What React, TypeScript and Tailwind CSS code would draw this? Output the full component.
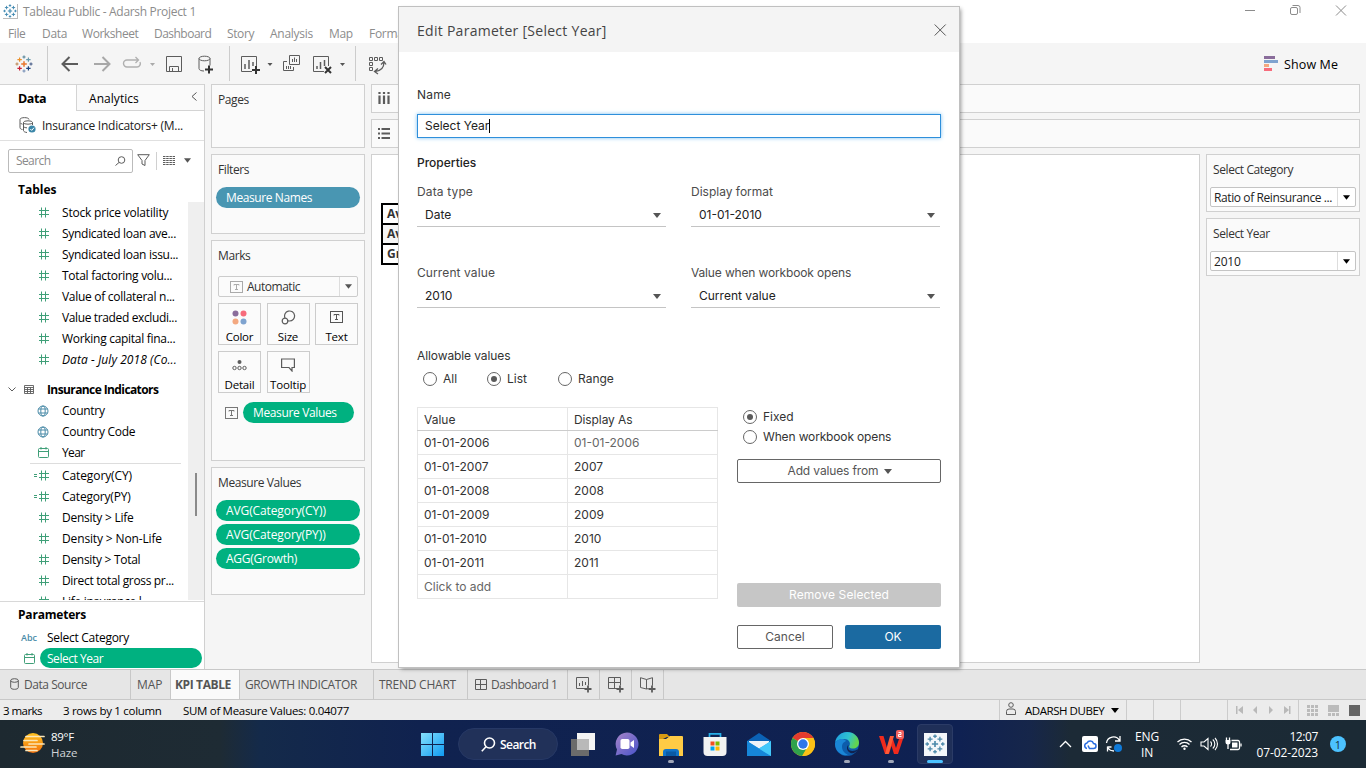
import type { ReactNode } from "react";

/* ---------- small glyphs ---------- */

function Caret({ className = "fill-[#555]" }: { className?: string }) {
  return (
    <svg width="8" height="5" viewBox="0 0 8 5" className={"shrink-0 " + className}>
      <path d="M0 0h8L4 5z" />
    </svg>
  );
}

function TableauMark({ size, colors }: { size: number; colors: string[] }) {
  const plus = (x: number, y: number, r: number, c: string, w = 1.2) => (
    <path key={x + "-" + y} d={`M${x - r} ${y}h${2 * r}M${x} ${y - r}v${2 * r}`} stroke={c} strokeWidth={w} />
  );
  return (
    <svg width={size} height={size} viewBox="0 0 18 18" fill="none" className="shrink-0">
      {plus(9, 9, 2.8, colors[0], 1.5)}
      {plus(9, 2, 1.6, colors[1])}
      {plus(9, 16, 1.6, colors[2])}
      {plus(2, 9, 1.6, colors[3])}
      {plus(16, 9, 1.6, colors[4])}
      {plus(4.6, 4.6, 2.2, colors[5])}
      {plus(13.4, 4.6, 2.2, colors[6])}
      {plus(4.6, 13.4, 2.2, colors[7])}
      {plus(13.4, 13.4, 2.2, colors[8])}
    </svg>
  );
}

function HashIcon({ calc = false }: { calc?: boolean }) {
  return (
    <svg width="15" height="11" viewBox="0 0 15 11" fill="none" stroke="#3f9f78" className="shrink-0">
      <path d="M5 3.5h10M5 7.5h10M7.5 .5v10M11.5 .5v10" />
      {calc && <path d="M0 4.5h3M0 6.5h3" />}
    </svg>
  );
}

function GlobeIcon() {
  return (
    <svg width="12" height="12" viewBox="0 0 12 12" fill="none" stroke="#4a8ba8" className="shrink-0">
      <circle cx="6" cy="6" r="5" />
      <ellipse cx="6" cy="6" rx="2.2" ry="5" />
      <path d="M1.5 4h9M1.5 8h9" />
    </svg>
  );
}

function CalendarIcon() {
  return (
    <svg width="11" height="11" viewBox="0 0 11 11" fill="none" stroke="#3f9f78" className="shrink-0">
      <rect x=".5" y="1.5" width="10" height="9" rx="1" />
      <path d="M.5 4.5h10M3 0v2.5M8 0v2.5" />
    </svg>
  );
}

function TextBoxIcon({ color = "#666" }: { color?: string }) {
  return (
    <svg width="13" height="12" viewBox="0 0 13 12" fill="none" stroke={color} className="shrink-0">
      <rect x=".5" y=".5" width="12" height="11" />
      <path d="M4 4.500v-1h5v1M6.500 3.500v5M5 8.500h3" />
    </svg>
  );
}

const g = { fill: "none", stroke: "#5c5c5c" } as const;

/* ---------- window chrome ---------- */

function TitleBar() {
  return (
    <div className="flex h-[23px] shrink-0 items-center bg-white">
      <div className="ml-[3px] flex size-[15px] items-center justify-center border-r border-b border-[#bbb]">
        <TableauMark size={14} colors={Array(9).fill("#3f88b0")} />
      </div>
      <span className="ml-[5px] text-[12px] tracking-[-0.31px] text-[#8c8c8c]">Tableau Public - Adarsh Project 1</span>
      <svg width="104" height="14" viewBox="0 0 104 14" fill="none" stroke="#8c8c8c" className="mr-[18px] mb-[3px] ml-auto">
        <path d="M1 7.500h10" />
        <rect x="46.500" y="4.500" width="7" height="7" rx="1.500" />
        <path d="M48.500 2.500h5.500a2 2 0 0 1 2 2v5.500" />
        <path d="M92 2.500l10 10M102 2.500l-10 10" />
      </svg>
    </div>
  );
}

function MenuBar() {
  return (
    <div className="flex h-5 shrink-0 items-center bg-white pt-[2px] pl-2 text-[12px] whitespace-nowrap text-[#8c8c8c]">
      <span className="w-[34px] tracking-[-0.4px]">File</span>
      <span className="w-[40px] tracking-[-0.3px]">Data</span>
      <span className="w-[72px] tracking-[-0.45px]">Worksheet</span>
      <span className="w-[73px] tracking-[-0.52px]">Dashboard</span>
      <span className="w-[43px] tracking-[-0.4px]">Story</span>
      <span className="w-[59px] tracking-[-0.27px]">Analysis</span>
      <span className="w-[40px] tracking-[-0.3px]">Map</span>
      <span className="tracking-[-0.3px]">Format</span>
    </div>
  );
}

function ToolBar() {
  return (
    <div className="flex h-[41px] shrink-0 items-center bg-[#f5f5f5]">
      <div className="flex h-[35px] w-[48px] items-center justify-center border-r border-[#ccc] pt-px">
        <TableauMark
          size={18}
          colors={["#e8762c", "#59879b", "#7b93b8", "#c08a5a", "#4a5f8a", "#eb912c", "#6a9aac", "#c72035", "#1f447e"]}
        />
      </div>
      <div className="flex h-[35px] w-[182px] items-center border-r border-[#ccc]">
        <svg width="181" height="24" viewBox="48 52 181 24" {...g}>
          <path d="M78 64H63M69.500 57L62.500 64l7 7" strokeWidth="2" />
          <path d="M94 64h15M102.500 57l7 7-7 7" stroke="#a8a8a8" strokeWidth="2" />
          <path d="M131 60h-4a3.500 3.500 0 0 0 0 7h10a3.500 3.500 0 0 0 3-5" stroke="#b0b0b0" strokeWidth="1.400" />
          <path d="M131 60h7M135.500 57l3 3-3 3" stroke="#b0b0b0" strokeWidth="1.300" />
          <path d="M150 63h5l-2.500 3z" fill="#aaa" stroke="none" />
          <path d="M166.500 56.500h15v15h-15zM169.500 71v-4.500h9V71M172.500 68v3" />
          <ellipse cx="204.500" cy="58.500" rx="5.500" ry="2.300" />
          <path d="M199 58.500v10c0 1.500 2 2.500 5 2.500M210 58.500v7" />
          <path d="M205 69.500h8M209 65.500v8" strokeWidth="2" stroke="#333" />
        </svg>
      </div>
      <div className="flex h-[35px] w-[126px] items-center border-r border-[#ccc]">
        <svg width="125" height="24" viewBox="230 52 125 24" {...g}>
          <path d="M252 71.500h-10.500v-15h15V66" />
          <path d="M245 69v-5M249 69v-9M253 66v-4" strokeWidth="1.500" />
          <path d="M252 70h8M256 66v8" strokeWidth="2" stroke="#333" />
          <path d="M267.500 63h5l-2.500 3z" fill="#555" stroke="none" />
          <path d="M289.500 55.500h10v9h-10zM287 61.500h-3.500v9h10V67" />
          <path d="M292.500 62v-3M294.500 62v-4.500M296.500 62v-3M286.500 69v-3M288.500 69v-3M290.500 69v-3" />
          <path d="M324 71.500h-10.500v-15h15V66" />
          <path d="M317 69v-3M320.500 69v-7M324.500 66v-6" strokeWidth="1.500" />
          <path d="M325 67l6 6M331 67l-6 6" strokeWidth="2" stroke="#333" />
          <path d="M340 63h5l-2.500 3z" fill="#555" stroke="none" />
        </svg>
      </div>
      <svg width="44" height="24" viewBox="356 52 44 24" {...g}>
        <path d="M369.500 57.500h3v3h-3zM374.500 57.500h3v3h-3zM379.500 57.500h3v3h-3zM369.500 62.500h3v3h-3zM369.500 67.500h3v3h-3z" />
        <path d="M384 62c0 6-3 9-9 9.500M381 64.500l3-3 2 3M378 68.500l-3.500 3 3.500 2.500" strokeWidth="1.300" />
      </svg>
      <div className="mr-[28px] ml-auto flex items-center gap-[6px] pt-[2px]">
        <svg width="14" height="16" viewBox="0 0 14 16" className="mb-px">
          <path d="M0 0h11v3H0z" fill="#8a6d9b" />
          <path d="M0 4h14v3H0z" fill="#7fa3cf" />
          <path d="M0 8h5v3H0z" fill="#f3a880" />
          <path d="M0 12h8v3H0z" fill="#f76c7c" />
        </svg>
        <span className="pt-px text-[12.500px] tracking-[0.1px] text-black">Show Me</span>
      </div>
    </div>
  );
}

/* ---------- data pane ---------- */

function Field({ icon, children, spacing = "tracking-[-0.29px]" }: { icon: ReactNode; children: ReactNode; spacing?: string }) {
  return (
    <div className="flex h-[21px] shrink-0 items-center pl-[34px]">
      <div className="flex w-[15px] shrink-0 justify-end">{icon}</div>
      <span className={"ml-[13px] text-[12px] whitespace-nowrap text-black " + spacing}>{children}</span>
    </div>
  );
}

function DataPane() {
  return (
    <aside className="flex w-[205px] shrink-0 flex-col overflow-hidden border-r border-[#d0d0d0] bg-white">
      <div className="flex h-[27px] shrink-0">
        <div className="flex w-[76px] items-center border-t border-[#d4d4d4] pt-[2px] pl-[18px] text-[12.500px] font-bold tracking-[-0.4px] text-black">
          Data
        </div>
        <div className="flex flex-1 items-center justify-between border border-r-0 border-[#d4d4d4] bg-[#fafafa] pr-[7px] pl-3">
          <span className="pt-[2px] text-[12px] tracking-[0.05px] text-black">Analytics</span>
          <svg width="6" height="9" viewBox="0 0 6 9" fill="none" stroke="#555" className="mb-[3px]">
            <path d="M5.500 .5L1 4.500l4.500 4" />
          </svg>
        </div>
      </div>
      <div className="flex h-[30px] shrink-0 items-center border-b border-[#e0e0e0] pl-[19px]">
        <svg width="17" height="16" viewBox="0 0 17 16" className="mb-px" {...g}>
          <path d="M10 2.500c0-2.500-9-2.500-9 0v8c0 1 1 2 2.500 2M1.500 6c.5.800 1 1 2 1.200" />
          <ellipse cx="9" cy="5.500" rx="4.500" ry="1.700" />
          <path d="M4.500 5.500v8c0 1 1.500 1.800 3.500 2M13.500 5.500V8M4.500 9.500c.8 1 2 1.300 3.500 1.300" />
          <circle cx="13" cy="12" r="3.600" fill="#3b86a8" stroke="none" />
          <path d="M11.300 12l1.400 1.400 2.300-2.700" stroke="#fff" />
        </svg>
        <span className="ml-[6px] text-[12px] tracking-[-0.25px] whitespace-nowrap text-[#222]">Insurance Indicators+ (M...</span>
      </div>
      <div className="flex h-[39px] shrink-0 items-center pl-2">
        <div className="flex h-6 w-[125px] items-center justify-between rounded-[2px] border border-[#bbb] pr-[6px] pl-[7px]">
          <span className="text-[12px] tracking-[-0.6px] text-[#8a8a8a]">Search</span>
          <svg width="11" height="10" viewBox="0 0 11 10" {...g}>
            <circle cx="6.500" cy="4" r="3.300" />
            <path d="M4 6.500L.5 9.500" />
          </svg>
        </div>
        <svg width="13" height="13" viewBox="0 0 13 13" className="ml-1" {...g}>
          <path d="M.700 .700h11.600L8 6.500v5l-3-1.500V6.500z" />
        </svg>
        <div className="ml-[6px] h-[18px] w-px bg-[#d0d0d0]" />
        <svg width="12" height="10" viewBox="0 0 12 10" fill="none" stroke="#5c5c5c" className="ml-[6px]">
          <path d="M0 .5h12M0 2.500h12M0 4.500h12M0 6.500h12M0 8.500h12" strokeDasharray="2.500 .7" strokeWidth="1" />
        </svg>
        <Caret className="ml-[9px] w-[7px] fill-[#555]" />
      </div>
      <div className="flex h-[22px] shrink-0 items-center pb-[2px] pl-[18px] text-[12px] font-bold text-black">Tables</div>
      <div className="flex h-[399px] shrink-0 overflow-hidden border-b border-white">
        <div className="flex w-[188px] flex-col overflow-hidden">
          <Field icon={<HashIcon />} spacing="tracking-[-0.2px]">Stock price volatility</Field>
          <Field icon={<HashIcon />}>Syndicated loan ave...</Field>
          <Field icon={<HashIcon />}>Syndicated loan issu...</Field>
          <Field icon={<HashIcon />}>Total factoring volu...</Field>
          <Field icon={<HashIcon />}>Value of collateral n...</Field>
          <Field icon={<HashIcon />} spacing="tracking-[-0.37px]">Value traded excludi...</Field>
          <Field icon={<HashIcon />}>Working capital fina...</Field>
          <Field icon={<HashIcon />} spacing="tracking-[0.07px] italic">Data - July 2018 (Co...</Field>
          <div className="mt-[9px] flex h-[21px] shrink-0 items-center pl-2">
            <svg width="8" height="5" viewBox="0 0 8 5" {...g}>
              <path d="M.5 .5L4 4 7.500 .5" />
            </svg>
            <svg width="10" height="9" viewBox="0 0 10 9" className="ml-2" {...g}>
              <path d="M.5 .5h9v8h-9zM.5 2.500h9M.5 4.500h9M.5 6.500h9M3.500 2.500v6M6.500 2.500v6" strokeWidth=".9" />
            </svg>
            <span className="ml-[13px] text-[12px] font-bold tracking-[-0.6px] whitespace-nowrap text-black">Insurance Indicators</span>
          </div>
          <Field icon={<GlobeIcon />}>Country</Field>
          <Field icon={<GlobeIcon />}>Country Code</Field>
          <Field icon={<CalendarIcon />} spacing="tracking-[-0.6px]">Year</Field>
          <div className="mr-[7px] mb-px ml-[30px] h-px shrink-0 bg-[#ddd]" />
          <Field icon={<HashIcon calc />} spacing="tracking-[-0.1px]">Category(CY)</Field>
          <Field icon={<HashIcon calc />} spacing="tracking-[-0.2px]">Category(PY)</Field>
          <Field icon={<HashIcon />} spacing="tracking-[-0.25px]">Density &gt; Life</Field>
          <Field icon={<HashIcon />} spacing="tracking-[-0.14px]">Density &gt; Non-Life</Field>
          <Field icon={<HashIcon />} spacing="tracking-[-0.3px]">Density &gt; Total</Field>
          <Field icon={<HashIcon />} spacing="tracking-[-0.34px]">Direct total gross pr...</Field>
          <Field icon={<HashIcon />}>Life insurance l</Field>
        </div>
        <div className="w-4 bg-[#efefef] pt-[271px] pl-[7px]">
          <div className="h-[43px] w-[2px] bg-[#8a8a8a]" />
        </div>
      </div>
      <div className="flex min-h-0 flex-1 flex-col border-t border-[#d8d8d8]">
        <div className="flex h-[26px] shrink-0 items-center pl-[18px] text-[12px] font-bold tracking-[-0.2px] text-black">Parameters</div>
        <div className="flex h-[20px] shrink-0 items-center pl-[21px]">
          <span className="w-[26px] text-[9px] font-semibold text-[#4a8ba8]">Abc</span>
          <span className="text-[12px] tracking-[-0.28px] text-black">Select Category</span>
        </div>
        <div className="flex h-[20px] shrink-0 items-center pl-[24px]">
          <CalendarIcon />
          <div className="ml-[5px] flex h-5 w-[162px] items-center rounded-full bg-[#00b180] pt-px pl-[7px] text-[12px] tracking-[-0.46px] text-white">
            Select Year
          </div>
        </div>
      </div>
    </aside>
  );
}

/* ---------- shelves ---------- */

function Card({ title, className, children }: { title: string; className: string; children?: ReactNode }) {
  return (
    <section className={"shrink-0 border border-[#d0d0d0] bg-[#fafafa] " + className}>
      <h2 className="pt-[6px] pl-[6px] text-[12px] leading-[18px] tracking-[-0.4px] text-[#333]">{title}</h2>
      {children}
    </section>
  );
}

function Pill({ children, className }: { children: ReactNode; className: string }) {
  return <div className={"flex h-[21px] items-center rounded-full text-[12px] text-white " + className}>{children}</div>;
}

function MarkButton({ label, spacing = "tracking-[-0.2px]", children }: { label: string; spacing?: string; children: ReactNode }) {
  return (
    <div className="flex h-[42px] w-[43px] flex-col items-center border border-[#ccc] bg-[#fbfbfb]">
      <div className="flex h-[26px] items-center justify-center">{children}</div>
      <span className={"text-[11.500px] leading-[13px] text-black " + spacing}>{label}</span>
    </div>
  );
}

function Shelves() {
  return (
    <div className="flex w-[160px] shrink-0 flex-col gap-[6px] pl-[6px]">
      <Card title="Pages" className="h-[64px] w-[154px]" />
      <Card title="Filters" className="h-[80px] w-[154px]">
        <Pill className="mt-[8px] ml-[4px] w-[144px] bg-[#4996b2] pl-[10px] tracking-[-0.4px]">Measure Names</Pill>
      </Card>
      <Card title="Marks" className="h-[221px] w-[154px]">
        <div className="mt-[11px] ml-[6px] flex h-[21px] w-[140px] items-center rounded-[2px] border border-[#ccc] bg-[#fbfbfb]">
          <div className="flex flex-1 items-center pl-[11px]">
            <TextBoxIcon color="#aaa" />
            <span className="ml-[4px] text-[12px] tracking-[-0.48px] text-[#333]">Automatic</span>
          </div>
          <div className="flex h-full w-[18px] items-center justify-center border-l border-[#ddd]">
            <Caret className="w-[7px] fill-[#555]" />
          </div>
        </div>
        <div className="mt-[6px] ml-[6px] grid w-[140px] grid-cols-3 gap-x-[5.500px] gap-y-[6px]">
          <MarkButton label="Color">
            <svg width="15" height="15" viewBox="0 0 15 15">
              <circle cx="3.500" cy="3.500" r="3" fill="#8a6d9b" />
              <circle cx="11.500" cy="3.500" r="3" fill="#f76c7c" />
              <circle cx="3.500" cy="11.500" r="3" fill="#f3a880" />
              <circle cx="11.500" cy="11.500" r="3" fill="#7fa3cf" />
            </svg>
          </MarkButton>
          <MarkButton label="Size">
            <svg width="15" height="15" viewBox="0 0 15 15" {...g} strokeWidth="1.200">
              <path d="M4 8A5 5 0 1 1 8.500 11L6.600 10.800" />
              <circle cx="4" cy="11" r="2.800" />
            </svg>
          </MarkButton>
          <MarkButton label="Text">
            <TextBoxIcon color="#555" />
          </MarkButton>
          <MarkButton label="Detail">
            <svg width="15" height="11" viewBox="0 0 15 11" {...g}>
              <circle cx="7.500" cy="2" r="2" fill="#5c5c5c" stroke="none" />
              <circle cx="2.500" cy="8" r="1.700" />
              <circle cx="7.500" cy="8" r="1.700" />
              <circle cx="12.500" cy="8" r="1.700" />
            </svg>
          </MarkButton>
          <MarkButton label="Tooltip" spacing="tracking-[-0.15px]">
            <svg width="14" height="14" viewBox="0 0 14 14" {...g} strokeWidth="1.200">
              <path d="M.6 1h12.800v8.500h-2.400v3.500L8 9.500H.6z" />
            </svg>
          </MarkButton>
        </div>
        <div className="mt-[9px] ml-[13px] flex items-center">
          <TextBoxIcon color="#777" />
          <Pill className="ml-[5px] w-[111px] bg-[#00b180] pl-[10px] tracking-[-0.36px]">Measure Values</Pill>
        </div>
      </Card>
      <Card title="Measure Values" className="h-[128px] w-[154px]">
        <div className="mt-[8px] ml-[4px] flex flex-col gap-[3px]">
          <Pill className="w-[144px] bg-[#00b180] pl-[10px] tracking-[-0.11px]">AVG(Category(CY))</Pill>
          <Pill className="w-[144px] bg-[#00b180] pl-[10px] tracking-[-0.11px]">AVG(Category(PY))</Pill>
          <Pill className="w-[144px] bg-[#00b180] pl-[10px] tracking-[-0.26px]">AGG(Growth)</Pill>
        </div>
      </Card>
    </div>
  );
}

function ParamCard({ title, value, className }: { title: string; value: string; className: string }) {
  return (
    <Card title={title} className="h-[58px] w-full">
      <div className="mt-[8px] ml-[3px] flex h-[20px] w-[146px] items-center rounded-[2px] border border-[#c4c4c4] bg-white">
        <span className={"flex-1 pt-px pl-[3px] text-[12px] whitespace-nowrap text-[#222] " + className}>{value}</span>
        <div className="flex h-full w-[18px] items-center justify-center border-l border-[#ddd]">
          <Caret className="w-[7px] fill-black" />
        </div>
      </div>
    </Card>
  );
}

function Canvas() {
  const row = "h-[20px] border-t-2 border-l-2 border-black pl-[4px] text-[12px] leading-[18px] font-bold text-[#333]";
  return (
    <div className="ml-[6px] flex min-w-0 flex-1 flex-col gap-[6px] pr-[6px]">
      <div className="h-[29px] shrink-0 border border-[#d0d0d0] bg-[#fafafa] pt-[7px] pl-[6px]">
        <svg width="12" height="12" viewBox="0 0 12 12" stroke="#5c5c5c" strokeWidth="2.200">
          <path d="M1.500 0v2M1.500 3.500V12M6 0v2M6 3.500V12M10.500 0v2M10.500 3.500V12" />
        </svg>
      </div>
      <div className="h-[29px] shrink-0 border border-[#d0d0d0] bg-[#fafafa] pt-[8px] pl-[6px]">
        <svg width="12" height="11" viewBox="0 0 12 11" stroke="#5c5c5c" strokeWidth="2">
          <path d="M0 1h2M3.500 1H12M0 5.500h2M3.500 5.500H12M0 10h2M3.500 10H12" />
        </svg>
      </div>
      <div className="flex min-h-0 flex-1 gap-[6px]">
        <div className="mb-[6px] flex-1 border border-[#d0d0d0] bg-white pt-[48px] pl-[9px]">
          <div className="w-[300px] border-b-2 border-black">
            <div className={row}>Avg</div>
            <div className={row + " bg-[#f5f5f5]"}>Avg</div>
            <div className={row}>Gro</div>
          </div>
        </div>
        <div className="flex w-[154px] flex-col gap-[6px]">
          <ParamCard title="Select Category" value="Ratio of Reinsurance ..." className="tracking-[-0.4px]" />
          <ParamCard title="Select Year" value="2010" className="tracking-[-0.2px]" />
        </div>
      </div>
    </div>
  );
}

/* ---------- bottom bars ---------- */

function SheetTabs() {
  const tab = "flex items-center border-r border-[#c8c8c8] text-[12px] whitespace-nowrap text-[#555] ";
  return (
    <div className="flex h-[31px] shrink-0 border-t border-b border-[#c8c8c8] bg-[#e6e6e6]">
      <div className={tab + "w-[131px] pl-[10px] tracking-[-0.45px]"}>
        <svg width="9" height="12" viewBox="0 0 9 12" className="mr-[5px] mb-px" {...g}>
          <ellipse cx="4.500" cy="2.500" rx="3.800" ry="1.800" />
          <path d="M.7 2.500v7c0 2.400 7.600 2.400 7.600 0v-7" />
        </svg>
        Data Source
      </div>
      <div className={tab + "w-[40px] pl-[6px] tracking-[-0.1px]"}>MAP</div>
      <div className={tab + "w-[69px] bg-[#fafafa] pl-[4px] font-bold tracking-[-0.38px]"}>KPI TABLE</div>
      <div className={tab + "w-[134px] pl-[5px] tracking-[-0.38px]"}>GROWTH INDICATOR</div>
      <div className={tab + "w-[94px] pl-[5px] tracking-[-0.24px]"}>TREND CHART</div>
      <div className={tab + "w-[100px] pl-[7px] tracking-[-0.5px]"}>
        <svg width="12" height="11" viewBox="0 0 12 11" className="mr-[4px] mb-px" {...g}>
          <path d="M.5 .5h11v10H.5zM.5 5.500h11M5.500 .5v10" />
        </svg>
        Dashboard 1
      </div>
      <div className={tab + "w-[32px] justify-center"}>
        <svg width="16" height="16" viewBox="0 0 16 16" {...g}>
          <path d="M9 11.500H.5V.5h12v8M3.500 9V6M6.500 9V4M9.500 8V5" />
          <path d="M8.500 12h7M12 8.500v7" strokeWidth="1.800" />
        </svg>
      </div>
      <div className={tab + "w-[32px] justify-center"}>
        <svg width="16" height="16" viewBox="0 0 16 16" {...g}>
          <path d="M9 11.500H.5V.5h12v8M.5 5.500h12M6.500 .5v11" />
          <path d="M8.500 12h7M12 8.500v7" strokeWidth="1.800" />
        </svg>
      </div>
      <div className={tab + "w-[32px] justify-center"}>
        <svg width="16" height="16" viewBox="0 0 16 16" {...g}>
          <path d="M6.500 12l-6-1.500V.7l6 1.800 6-1.800v8M6.500 2.500V12l2-.5" />
          <path d="M8.500 12h7M12 8.500v7" strokeWidth="1.800" />
        </svg>
      </div>
    </div>
  );
}

function StatusBar() {
  const cell = "h-full shrink-0 border-l border-[#ccc] ";
  return (
    <div className="flex h-[20px] shrink-0 items-center bg-[#ececec] text-[11.500px] whitespace-nowrap text-black">
      <span className="ml-[3px] w-[60px] pt-px tracking-[-0.55px]">3 marks</span>
      <span className="w-[120px] pt-px tracking-[-0.3px]">3 rows by 1 column</span>
      <span className="pt-px tracking-[-0.31px]">SUM of Measure Values: 0.04077</span>
      <div className={cell + "ml-auto flex w-[127px] items-center"}>
        <svg width="10" height="13" viewBox="0 0 10 13" className="mb-[3px] ml-[6px]" {...g}>
          <circle cx="5" cy="3" r="2.300" />
          <path d="M.5 12.500v-3a2.500 2.500 0 0 1 2.500-2.500h4a2.500 2.500 0 0 1 2.500 2.500v3z" />
        </svg>
        <span className="ml-[9px] w-[79px] pt-px tracking-[-0.45px]">ADARSH DUBEY</span>
        <Caret className="ml-[7px] fill-black" />
      </div>
      <div className={cell + "w-[27px]"} />
      <div className={cell + "w-[27px]"} />
      <div className={cell + "w-[47px]"} />
      <div className={cell + "flex w-[71px] items-center pl-2"}>
        <svg width="56" height="8" viewBox="0 0 56 8" fill="#b9b9b9">
          <path d="M0 0h1.500v8H0zM7 0v8L2 4zM21 0v8l-4-4zM33 0v8l4-4zM48 0v8l5-4zM53 0h1.500v8H53z" />
        </svg>
      </div>
      <div className={cell + "flex w-[68px] items-center gap-[10px] pl-2"}>
        <svg width="11" height="11" viewBox="0 0 11 11" fill="#bbb">
          <path d="M0 0h3v3H0zM4 0h3v3H4zM8 0h3v3H8zM0 4h3v3H0zM4 4h3v3H4zM8 4h3v3H8zM0 8h3v3H0zM4 8h3v3H4zM8 8h3v3H8z" />
        </svg>
        <svg width="11" height="11" viewBox="0 0 11 11" fill="#bbb">
          <path d="M0 0h11v7H0zM0 8h3v3H0zM4 8h3v3H4zM8 8h3v3H8z" />
        </svg>
        <div className="size-[11px] bg-[#666]" />
      </div>
    </div>
  );
}

function TaskApp({ children, running = false }: { children: ReactNode; running?: boolean }) {
  return (
    <div className="relative flex h-full w-[44px] shrink-0 items-center justify-center">
      {children}
      {running && <div className="absolute bottom-[5px] h-[3px] w-[6px] rounded-full bg-[#a0a6b8]" />}
    </div>
  );
}

function TaskBar() {
  return (
    <div className="flex h-[48px] shrink-0 items-center bg-[linear-gradient(90deg,#1d2930_0px,#1e2b34_220px,#142a4a_260px,#10224f_420px,#0f2152_960px,#16264a_1030px,#1c2a36_1070px,#1b2a35_1366px)] text-white">
      <svg width="25" height="22" viewBox="0 0 25 22" className="mb-[2px] ml-[20px] shrink-0">
        <defs>
          <linearGradient id="sun" x1="0" y1="0" x2="0" y2="1">
            <stop offset="0" stopColor="#ffc21f" />
            <stop offset="1" stopColor="#f2700c" />
          </linearGradient>
        </defs>
        <circle cx="13" cy="11" r="10" fill="url(#sun)" />
        <path d="M6 4.500h18M4 8.500h13M9 12h15M1 15h15M6 18.500h11" stroke="#fbe6b8" strokeWidth="1.700" strokeLinecap="round" />
      </svg>
      <div className="ml-[6px] flex w-[359px] shrink-0 flex-col pt-px text-[11.500px] leading-[16px] tracking-[-0.1px]">
        <span className="tracking-[-0.3px]">89°F</span>
        <span className="text-[#d0d4d8]">Haze</span>
      </div>
      <TaskApp>
        <svg width="23" height="23" viewBox="0 0 23 23">
          <defs>
            <linearGradient id="win" x1="0" y1="0" x2="1" y2="1">
              <stop offset="0" stopColor="#85e0fb" />
              <stop offset="1" stopColor="#0f9bf3" />
            </linearGradient>
          </defs>
          <path d="M0 0h11v11H0zM12 0h11v11H12zM0 12h11v11H0zM12 12h11v11H12z" fill="url(#win)" />
        </svg>
      </TaskApp>
      <div className="mr-[3px] ml-[4px] flex h-8 w-[100px] shrink-0 items-center rounded-full border border-[#263865] bg-[#213159] pl-[22px]">
        <svg width="15" height="15" viewBox="0 0 15 15" fill="none" stroke="#fff" strokeWidth="1.600">
          <circle cx="8.500" cy="6" r="5" />
          <path d="M5 9.800L.8 14.200" />
        </svg>
        <span className="ml-[4px] pt-px text-[12px] font-semibold tracking-[-0.55px]">Search</span>
      </div>
      <TaskApp>
        <svg width="24" height="23" viewBox="0 0 24 23">
          <path d="M0 6h18v17H0z" fill="#6b6b6b" />
          <path d="M6 0h18v17H6z" fill="#f4f4f4" />
          <path d="M6 6h12v11H6z" fill="#b9b9b9" />
        </svg>
      </TaskApp>
      <TaskApp>
        <svg width="24" height="24" viewBox="0 0 24 24">
          <defs>
            <linearGradient id="chat" x1="0" y1="0" x2="1" y2="1">
              <stop offset="0" stopColor="#a785c9" />
              <stop offset="1" stopColor="#4853c9" />
            </linearGradient>
          </defs>
          <path d="M12 .5a11.500 11.500 0 1 1-5.500 21.600L.6 23.500 2 17.500A11.500 11.500 0 0 1 12 .5z" fill="url(#chat)" />
          <rect x="5.500" y="7" width="9" height="10" rx="1.800" fill="#fff" />
          <path d="M15.500 10.500l3.500-2.500v8l-3.500-2.500z" fill="#fff" />
        </svg>
      </TaskApp>
      <TaskApp running>
        <svg width="24" height="23" viewBox="0 0 24 23">
          <path d="M0 2a1 1 0 0 1 1-1h7l3 3h-3L0 8z" fill="#d79a12" />
          <path d="M0 6h7l4-3h12a1 1 0 0 1 1 1v19H0z" fill="#ffcb45" />
          <path d="M4 23v-4a3 3 0 0 1 3-3h10a3 3 0 0 1 3 3v4z" fill="#1173c9" />
          <path d="M7 18.500h10V23H7z" fill="#0a5aa5" />
        </svg>
      </TaskApp>
      <TaskApp>
        <svg width="24" height="24" viewBox="0 0 24 24">
          <path d="M6.500 6V1.800h11V6" fill="none" stroke="#27aee8" strokeWidth="1.700" />
          <path d="M.5 5h23v15a4 4 0 0 1-4 4h-15a4 4 0 0 1-4-4z" fill="#f2f2f2" />
          <path d="M7.500 9.500h4v4h-4z" fill="#f25022" />
          <path d="M12.500 9.500h4v4h-4z" fill="#7fba00" />
          <path d="M7.500 14.500h4v4h-4z" fill="#00a4ef" />
          <path d="M12.500 14.500h4v4h-4z" fill="#ffb900" />
        </svg>
      </TaskApp>
      <TaskApp>
        <svg width="24" height="23" viewBox="0 0 24 23">
          <path d="M0 8l12-8 12 8v3H0z" fill="#0b62b5" />
          <path d="M2 8h20v8H2z" fill="#f0f3f8" />
          <path d="M0 8l12 7.500L24 8v15H0z" fill="#2aa5ea" />
          <path d="M0 8l24 15H0z" fill="#1686d9" />
          <path d="M24 8v15L12 15.500z" fill="#43c8fa" />
        </svg>
      </TaskApp>
      <TaskApp>
        <svg width="24" height="24" viewBox="0 0 24 24">
          <circle cx="12" cy="12" r="12" fill="#fbc116" />
          <path d="M12 12L1.600 6A12 12 0 0 1 22.400 6z" fill="#e33b2e" />
          <path d="M1.600 6A12 12 0 0 0 11 24l5.500-9L12 12z" fill="#2fa24c" />
          <path d="M12 6h10.400A12 12 0 0 1 11.500 24l5.500-9.500z" fill="#fbc116" />
          <circle cx="12" cy="12" r="6" fill="#fff" />
          <circle cx="12" cy="12" r="4.700" fill="#2e75e8" />
        </svg>
      </TaskApp>
      <TaskApp running>
        <svg width="24" height="24" viewBox="0 0 24 24">
          <defs>
            <linearGradient id="edge" x1="0" y1="0" x2="1" y2=".3">
              <stop offset="0" stopColor="#1e9de0" />
              <stop offset=".6" stopColor="#2fc3d0" />
              <stop offset="1" stopColor="#63d54f" />
            </linearGradient>
          </defs>
          <circle cx="12" cy="12" r="12" fill="#0d5cab" />
          <path d="M.2 10C1.500 4 6.500 0 12 0c7 0 12 5 12 10.500 0 4-3 6-6 6-3.500 0-4.500-1.500-3.500-3 1.500-3-1-6.500-5-6.500C5 7 1.500 8.500.2 10z" fill="url(#edge)" />
          <path d="M9.500 10C5.500 12 6 20 13 22.500 8 25 0 20 0 12c0-3 4-5 7-5 2 0 3.500 1 4 2z" fill="#1a86d6" />
          <path d="M23 17c-4 3-12 3-9.500-4-2 1-2.500 6 2 8 3 1 6-1 7.500-4z" fill="#10224f" />
        </svg>
      </TaskApp>
      <TaskApp running>
        <svg width="27" height="26" viewBox="0 0 27 26" className="mb-[3px]">
          <path d="M1 6h4.500l3.500 12 3-9h3l3 9L22 6h4l-6 18h-4L13.500 16 11 24H7z" fill="#f02a1d" />
          <path d="M12 6h4l-5.500 18H7z" fill="#ff5a36" />
          <rect x="18" y="0" width="8" height="9" rx="2" fill="#f0615f" />
          <path d="M20.500 2.500h2.500v2h-2.500v2h3" fill="none" stroke="#fff" />
        </svg>
      </TaskApp>
      <div className="relative ml-[4px] flex h-10 w-[36px] shrink-0 items-center justify-center rounded-[4px] border border-[#2b3b66] bg-[#1f2f58]">
        <div className="flex size-[23px] items-center justify-center bg-[#f4f7fa]">
          <TableauMark size={20} colors={Array(9).fill("#4e8bab")} />
        </div>
        <div className="absolute bottom-0 h-[3px] w-4 rounded-full bg-[#4cc2ff]" />
      </div>
      <svg width="68" height="20" viewBox="0 0 68 20" fill="none" stroke="#fff" strokeWidth="1.300" className="ml-auto shrink-0">
        <path d="M1 13l5.500-5.500L12 13" />
        <rect x="23" y="2" width="16" height="16" rx="2" fill="#fff" stroke="none" />
        <path d="M28 14.500a2.800 2.800 0 0 1 0-5.500 3.500 3.500 0 0 1 6.500.500 2.500 2.500 0 0 1 0 5h-4l-1.500-3" stroke="#2a6de0" strokeWidth="1.500" />
        <path d="M47.500 9a7 7 0 0 1 13-2.500M61 2v5h-5M48.500 13h4M48.500 12.500v5M49 14c1 1.500 3 3 6 3" />
        <circle cx="59" cy="14" r="4" fill="#0f7ad8" stroke="none" />
      </svg>
      <div className="ml-[3px] flex w-[34px] shrink-0 flex-col items-center pt-px text-[12px] leading-[16px] tracking-[-0.2px]">
        <span>ENG</span>
        <span>IN</span>
      </div>
      <svg width="68" height="20" viewBox="0 0 68 20" fill="none" stroke="#fff" strokeWidth="1.300" className="ml-[12px] shrink-0">
        <path d="M1.500 8a10 10 0 0 1 14 0M3.500 10.500a7 7 0 0 1 10 0M5.500 13a4.200 4.200 0 0 1 6 0" />
        <circle cx="8.500" cy="14.800" r="1.200" fill="#fff" stroke="none" />
        <path d="M25 8h3l4-3.500v11L28 12h-3zM34.500 7.500a3.500 3.500 0 0 1 0 5M36.800 5.500a6 6 0 0 1 0 9M39 4a8.500 8.500 0 0 1 0 12" strokeWidth="1.100" />
        <path d="M55.500 6.500h6.500a1.500 1.500 0 0 1 1.500 1.500v6a1.500 1.500 0 0 1-1.500 1.500h-8" />
        <path d="M56 8.500h5.500v5H56z" fill="#fff" stroke="none" />
        <path d="M65 9.500v3M50.500 3.500v2.500M53.500 3.500v2.500M52 10v5" strokeWidth="1.300" />
        <path d="M49.500 6h5v2a2.500 2.500 0 0 1-5 0z" fill="#fff" stroke="none" />
      </svg>
      <div className="ml-[4px] flex w-[70px] shrink-0 flex-col items-end pt-px text-[12px] leading-[16px] tracking-[-0.1px]">
        <span className="tracking-[-0.4px]">12:07</span>
        <span>07-02-2023</span>
      </div>
      <div className="mr-[20px] ml-[12px] flex size-4 shrink-0 items-center justify-center rounded-full bg-[#4cc2ff] text-[11px] leading-none text-[#17313f]">1</div>
    </div>
  );
}

/* ---------- dialog ---------- */

function SelectField({ label, value, spacing = "" }: { label: string; value: string; spacing?: string }) {
  return (
    <div>
      <div className={"text-[12px] leading-4 text-[#4c4c4c] " + spacing}>{label}</div>
      <div className="flex h-[27px] items-center justify-between border-b border-[#c4c4c4] pt-[4px] pr-[5px] pl-2 text-[12px] text-[#222]">
        {value}
        <Caret />
      </div>
    </div>
  );
}

function Radio({ label, on = false, spacing = "" }: { label: string; on?: boolean; spacing?: string }) {
  return (
    <label className={"flex h-5 items-center gap-[6px] text-[12px] whitespace-nowrap text-[#333] " + spacing}>
      <span className="flex size-[14px] items-center justify-center rounded-full border border-[#666]">
        {on && <span className="size-[6px] rounded-full bg-[#5a5a5a]" />}
      </span>
      {label}
    </label>
  );
}

const VALUES = [
  ["01-01-2006", "01-01-2006"],
  ["01-01-2007", "2007"],
  ["01-01-2008", "2008"],
  ["01-01-2009", "2009"],
  ["01-01-2010", "2010"],
  ["01-01-2011", "2011"],
];

function EditParameterDialog() {
  return (
    <div className="absolute top-[7px] left-[399px] flex h-[660px] w-[560px] flex-col bg-white font-['Inter',sans-serif] shadow-[0_0_0_1px_#c0c0c0,2px_2px_4px_rgba(0,0,0,0.4)]">
      <div className="flex h-[45px] shrink-0 items-center justify-between bg-[#f4f4f4] pr-[12px] pl-[18px]">
        <span className="pt-[2px] font-['Open_Sans',sans-serif] text-[14px] tracking-[0.28px] text-[#444]">Edit Parameter [Select Year]</span>
        <svg width="13" height="12" viewBox="0 0 13 12" fill="none" stroke="#555">
          <path d="M.7 .5l11 11M11.700 .5l-11 11" />
        </svg>
      </div>
      <div className="flex flex-1 flex-col px-[18px]">
        <div className="mt-[35px] text-[12px] leading-4 tracking-[0.18px] text-[#333]">Name</div>
        <div className="mt-[11px] flex h-6 w-[524px] items-center border border-[#2e8fdb] pl-[7px] text-[12px] text-[#222] shadow-[0_0_4px_#7cc0f0]">
          Select Year
          <span className="h-[14px] w-px bg-black" />
        </div>
        <div className="mt-[17px] text-[12px] leading-4 font-medium text-[#222]">Properties</div>
        <div className="mt-[13px] grid w-[524px] grid-cols-[249px_249px] gap-x-[25px] gap-y-[38px]">
          <SelectField label="Data type" value="Date" spacing="tracking-[0.14px]" />
          <SelectField label="Display format" value="01-01-2010" />
          <SelectField label="Current value" value="2010" spacing="tracking-[0.1px]" />
          <SelectField label="Value when workbook opens" value="Current value" spacing="tracking-[-0.15px]" />
        </div>
        <div className="mt-[40px] text-[12px] leading-4 tracking-[-0.1px] text-[#333]">Allowable values</div>
        <div className="mt-[5px] flex pl-[6px]">
          <div className="w-[64px]"><Radio label="All" /></div>
          <div className="w-[71px]"><Radio label="List" on /></div>
          <Radio label="Range" />
        </div>
        <div className="mt-[18px] flex items-start">
          <table className="w-[301px] table-fixed border-collapse text-left text-[12px] leading-4 text-[#333]">
            <thead>
              <tr className="h-[23px]">
                <th className="w-[150px] border border-[#e6e6e6] border-b-[#ccc] px-[6px] pt-[2px] font-normal">Value</th>
                <th className="border border-[#e6e6e6] border-b-[#ccc] px-[6px] pt-[2px] font-normal tracking-[-0.1px]">Display As</th>
              </tr>
            </thead>
            <tbody>
              {VALUES.map(([v, d], i) => (
                <tr key={v} className="h-[24px]">
                  <td className="border border-[#e6e6e6] px-[6px]">{v}</td>
                  <td className={i === 0 ? "border border-[#e6e6e6] px-[6px] text-[#666]" : "border border-[#e6e6e6] px-[6px]"}>{d}</td>
                </tr>
              ))}
              <tr className="h-[24px]">
                <td className="border border-[#e6e6e6] px-[6px] text-[#666]">Click to add</td>
                <td className="border border-[#e6e6e6]" />
              </tr>
            </tbody>
          </table>
          <div className="ml-[19px] flex w-[204px] flex-col">
            <div className="pl-[6px]">
              <Radio label="Fixed" on />
              <Radio label="When workbook opens" spacing="tracking-[-0.15px]" />
            </div>
            <button className="mt-[12px] flex h-6 items-center justify-center gap-[5px] rounded-[2px] border border-[#666] pl-px text-[12px] tracking-[-0.13px] text-[#555]">
              Add values from <Caret />
            </button>
            <button className="mt-[100px] h-6 rounded-[2px] bg-[#c6c6c6] text-[12px] tracking-[0.1px] text-white">Remove Selected</button>
            <div className="mt-[18px] flex justify-between">
              <button className="h-6 w-[96px] rounded-[2px] border border-[#666] text-[12px] leading-[22px] text-[#555]">Cancel</button>
              <button className="h-6 w-[96px] rounded-[2px] bg-[#1b6aa1] text-[12px] leading-6 text-white">OK</button>
            </div>
          </div>
        </div>
      </div>
    </div>
  );
}

export default function App() {
  return (
    <div className="relative flex h-[768px] w-[1366px] flex-col overflow-hidden bg-[#f5f5f5] font-['Open_Sans','Noto_Sans',sans-serif]">
      <TitleBar />
      <MenuBar />
      <ToolBar />
      <div className="flex min-h-0 flex-1">
        <DataPane />
        <Shelves />
        <Canvas />
      </div>
      <SheetTabs />
      <StatusBar />
      <TaskBar />
      <EditParameterDialog />
    </div>
  );
}
